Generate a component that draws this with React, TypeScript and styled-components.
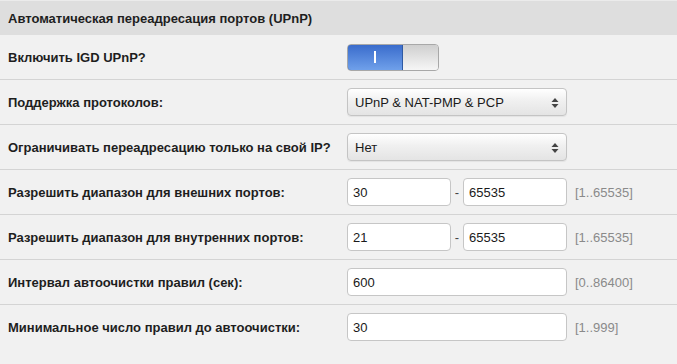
import styled, { createGlobalStyle } from 'styled-components';

const GlobalStyle = createGlobalStyle`
  html, body {
    margin: 0;
    padding: 0;
    background: #f1f1f1;
  }

  body {
    font-family: 'Liberation Sans', Arial, sans-serif;
    color: #222;
  }
`;

const Root = styled.section`
  width: 677px;
  height: 364px;
  overflow: hidden;
  background: #f1f1f1;
  border-top: 1px solid #ebebeb;
  box-sizing: border-box;
`;

const Header = styled.h3`
  margin: 0;
  height: 34px;
  padding: 0 8px;
  display: flex;
  align-items: center;
  background: #dedede;
  font-size: 13px;
  font-weight: 700;
  color: #1e1e1e;
`;

const Row = styled.div<{ $last?: boolean }>`
  display: grid;
  grid-template-columns: 339px 1fr;
  align-items: center;
  height: 44px;
  border-bottom: ${({ $last }) => ($last ? 'none' : '1px solid #d4d4d4')};
`;

const Label = styled.label`
  padding-left: 8px;
  font-size: 13px;
  font-weight: 700;
  color: #1e1e1e;
`;

const Control = styled.div`
  display: flex;
  align-items: center;
  padding-left: 8px;
`;

const Switch = styled.div`
  display: flex;
  width: 92px;
  height: 27px;
  box-sizing: border-box;
  border-radius: 4px;
  overflow: hidden;
  border: 1px solid #a8a8a8;
`;

const SwitchOn = styled.div`
  width: 54px;
  display: flex;
  align-items: center;
  justify-content: center;
  background: linear-gradient(#3a6ccc, #6fa0ea);
  margin: -1px 0 -1px -1px;
  border-radius: 4px 0 0 4px;
  border: 1px solid #2f5aa3;
`;

const SwitchBar = styled.span`
  width: 2px;
  height: 12px;
  background: #fff;
`;

const SwitchOff = styled.div`
  flex: 1;
  background: linear-gradient(#cfcfcf, #f6f6f6);
`;

const Select = styled.div`
  position: relative;
  width: 220px;
  height: 28px;
  box-sizing: border-box;
  display: flex;
  align-items: center;
  padding: 0 24px 0 7px;
  border: 1px solid #c4c4c4;
  border-radius: 4px;
  background: linear-gradient(#ffffff, #f0f0f0 45%, #e4e4e4);
  box-shadow: 0 1px 1px rgba(0, 0, 0, 0.06);
  font-size: 13px;
  color: #1a1a1a;
`;

const Arrows = styled.svg`
  position: absolute;
  right: 7px;
  top: 8px;
`;

const Input = styled.input<{ $wide?: boolean }>`
  width: ${({ $wide }) => ($wide ? '220px' : '104px')};
  height: 28px;
  box-sizing: border-box;
  margin: 0;
  padding: 0 5px;
  border: 1px solid #c6c6c6;
  border-radius: 4px;
  background: #fff;
  font-family: 'Liberation Sans', Arial, sans-serif;
  font-size: 13px;
  color: #1a1a1a;
  outline: none;
`;

const Dash = styled.span`
  width: 12px;
  text-align: center;
  font-size: 13px;
  color: #444;
`;

const Hint = styled.span`
  margin-left: 8px;
  font-size: 13px;
  color: #8a8a8a;
`;

const SelectBox = ({ value }: { value: string }) => (
  <Select>
    {value}
    <Arrows width="8" height="12" viewBox="0 0 8 12">
      <path d="M4 1 L7.5 5 H0.5 Z" fill="#444" />
      <path d="M4 11 L7.5 7 H0.5 Z" fill="#444" />
    </Arrows>
  </Select>
);

const Range = ({ from, to, hint }: { from: string; to: string; hint: string }) => (
  <Control>
    <Input defaultValue={from} />
    <Dash>-</Dash>
    <Input defaultValue={to} />
    <Hint>{hint}</Hint>
  </Control>
);

export default function App() {
  return (
    <Root>
      <GlobalStyle />
      <Header>Автоматическая переадресация портов (UPnP)</Header>
      <Row>
        <Label>Включить IGD UPnP?</Label>
        <Control>
          <Switch>
            <SwitchOn>
              <SwitchBar />
            </SwitchOn>
            <SwitchOff />
          </Switch>
        </Control>
      </Row>
      <Row>
        <Label>Поддержка протоколов:</Label>
        <Control>
          <SelectBox value="UPnP & NAT-PMP & PCP" />
        </Control>
      </Row>
      <Row>
        <Label>Ограничивать переадресацию только на свой IP?</Label>
        <Control>
          <SelectBox value="Нет" />
        </Control>
      </Row>
      <Row>
        <Label>Разрешить диапазон для внешних портов:</Label>
        <Range from="30" to="65535" hint="[1..65535]" />
      </Row>
      <Row>
        <Label>Разрешить диапазон для внутренних портов:</Label>
        <Range from="21" to="65535" hint="[1..65535]" />
      </Row>
      <Row>
        <Label>Интервал автоочистки правил (сек):</Label>
        <Control>
          <Input $wide defaultValue="600" />
          <Hint>[0..86400]</Hint>
        </Control>
      </Row>
      <Row $last>
        <Label>Минимальное число правил до автоочистки:</Label>
        <Control>
          <Input $wide defaultValue="30" />
          <Hint>[1..999]</Hint>
        </Control>
      </Row>
    </Root>
  );
}
